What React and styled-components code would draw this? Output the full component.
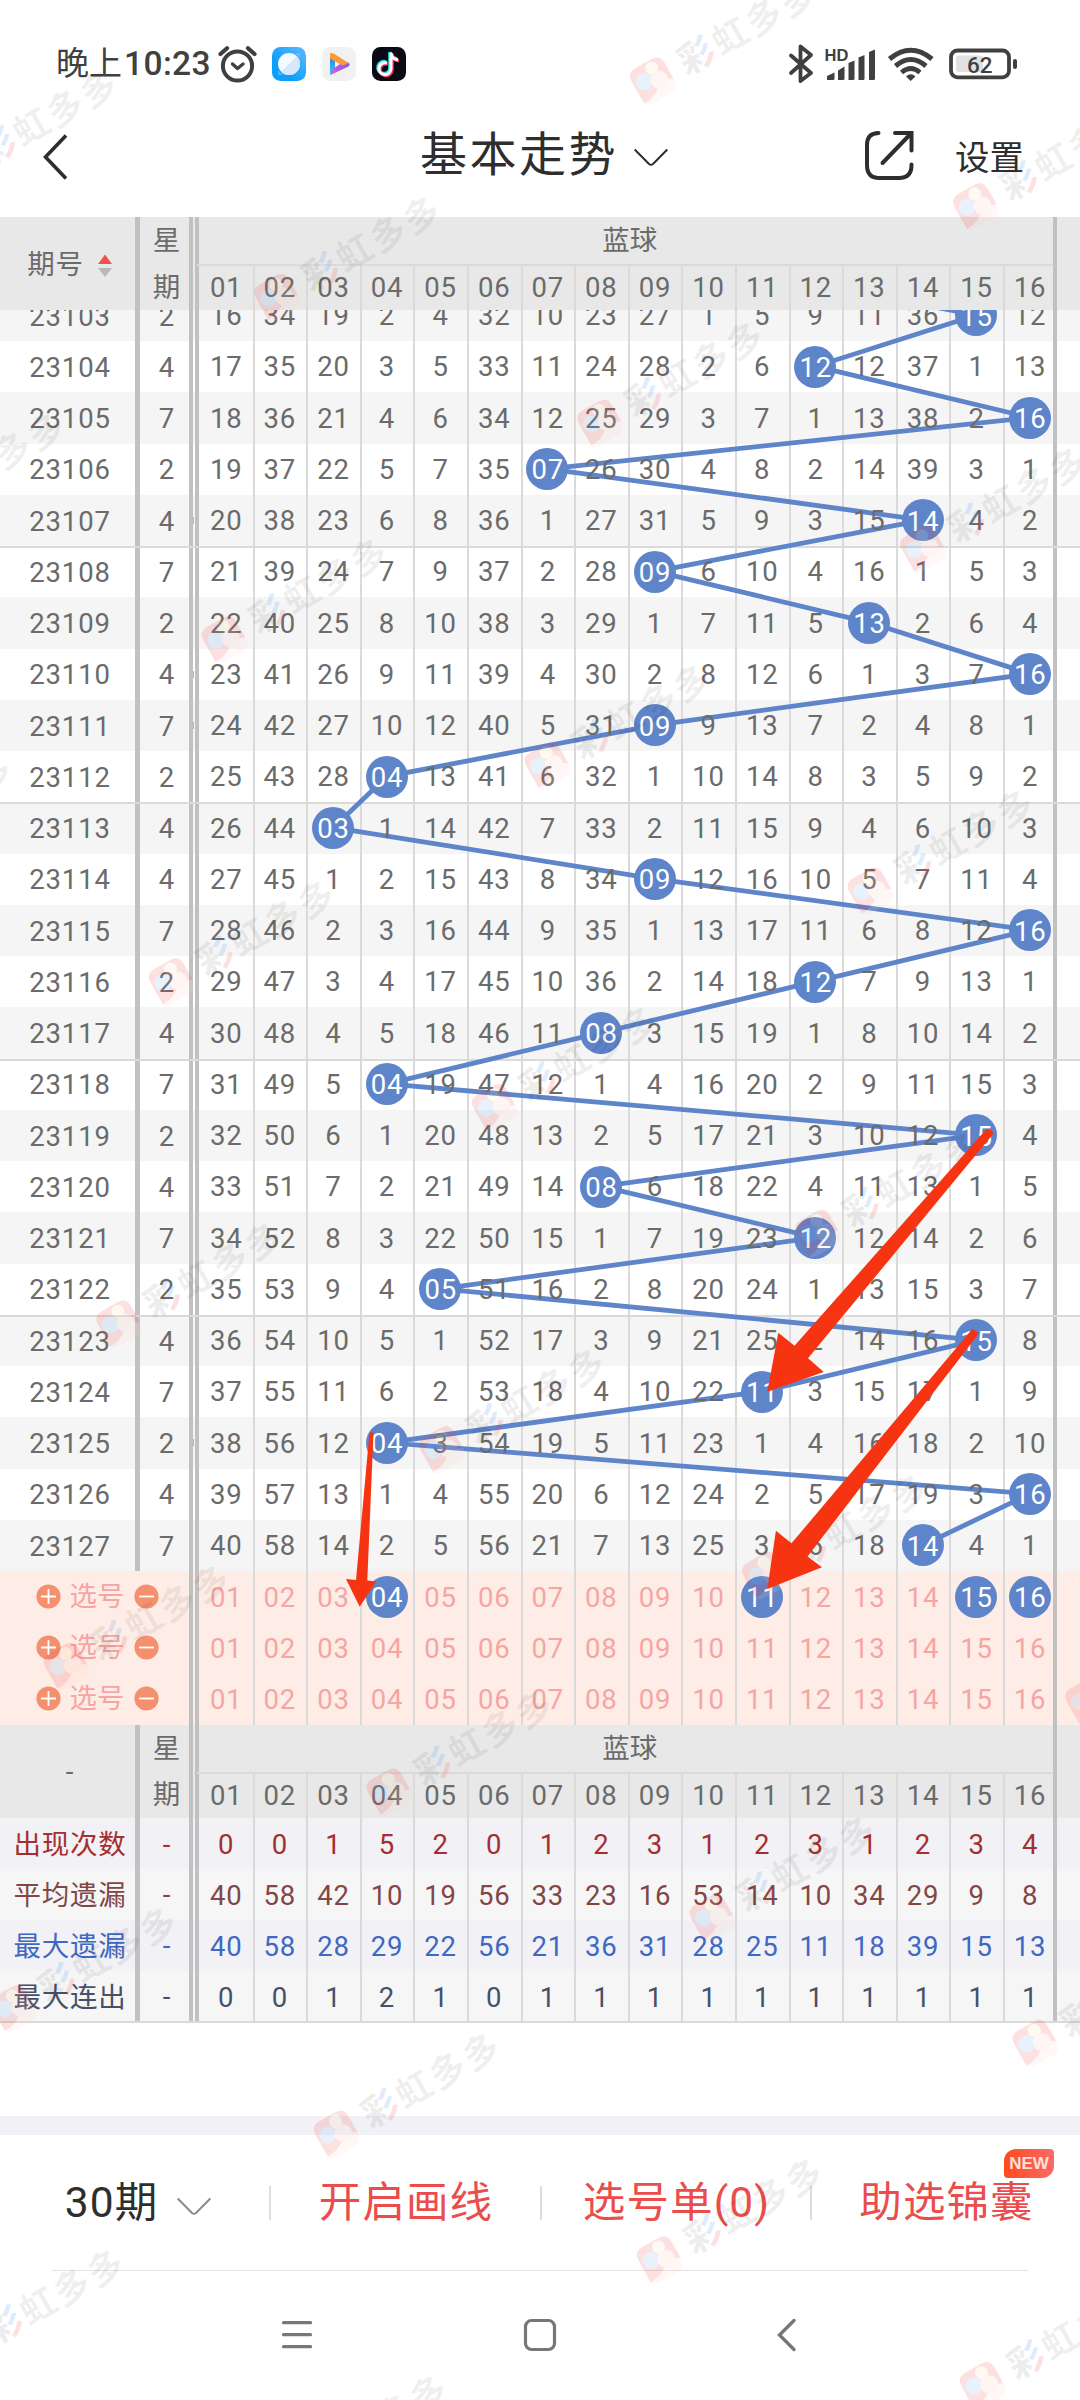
import React from 'react';
import styled, { createGlobalStyle, css } from 'styled-components';

const GlobalStyle = createGlobalStyle`
  * { box-sizing: border-box; }
  body { margin: 0; background: #fff; }
`;

const COL = 53.6;
const ROW = 51.25;
const GRID_X = 199.5;

const HITS = [15, 12, 16, 7, 14, 9, 13, 16, 9, 4, 3, 9, 16, 12, 8, 4, 15, 8, 12, 5, 15, 11, 4, 16, 14];
const WEEKDAYS = [2, 4, 7, 2, 4, 7, 2, 4, 7, 2, 4, 4, 7, 2, 4, 7, 2, 4, 7, 2, 4, 7, 2, 4, 7];
const FIRST_MISSES = [16, 34, 19, 2, 4, 32, 10, 23, 27, 1, 5, 9, 11, 36, 0, 12];
const NUMBERS = Array.from({ length: 16 }, (_, i) => i + 1);
const RULED = [23108, 23113, 23118, 23123];
const MARKED = [23107, 23110, 23111, 23125];
const pad = (n) => String(n).padStart(2, '0');

const DRAWS = [];
HITS.forEach((hit, i) => {
  const prev = i ? DRAWS[i - 1].misses : null;
  DRAWS.push({
    issue: 23103 + i,
    weekday: WEEKDAYS[i],
    hit,
    misses: prev ? prev.map((m, c) => (c + 1 === hit ? 0 : m + 1)) : FIRST_MISSES,
  });
});

const PICKS = [[4, 11, 15, 16], [], []];

const STATS = [
  { label: '出现次数', color: '#a52f2f', bg: '#f1f1f6', values: [0, 0, 1, 5, 2, 0, 1, 2, 3, 1, 2, 3, 1, 2, 3, 4] },
  { label: '平均遗漏', color: '#824646', bg: '#f6f6f6', values: [40, 58, 42, 10, 19, 56, 33, 23, 16, 53, 14, 10, 34, 29, 9, 8] },
  { label: '最大遗漏', color: '#3f68c2', bg: '#f1f1f6', values: [40, 58, 28, 29, 22, 56, 21, 36, 31, 28, 25, 11, 18, 39, 15, 13] },
  { label: '最大连出', color: '#47506a', bg: '#f6f6f6', values: [0, 0, 1, 2, 1, 0, 1, 1, 1, 1, 1, 1, 1, 1, 1, 1] },
];

const Screen = styled.div`
  position: relative;
  width: 1080px;
  height: 2400px;
  overflow: hidden;
  display: flex;
  flex-direction: column;
  background: #fff;
  color: #2e2e2e;
  font-family: Roboto, 'Noto Sans CJK SC', sans-serif;
  white-space: nowrap;
`;

const StatusBar = styled.header`
  height: 92px;
  padding: 36px 62px 0 56px;
  display: flex;
  align-items: flex-start;
  justify-content: space-between;
  color: #404040;
`;

const StatusGroup = styled.div`
  height: 56px;
  display: flex;
  align-items: center;
`;

const Clock = styled.span`
  width: 160px;
  font-size: 33px;
  font-weight: 400;
  line-height: 56px;
`;

const ClockDigits = styled.span`
  margin-left: 2px;
  font-size: 33.5px;
  font-weight: 500;
  letter-spacing: 0.4px;
`;

const AppIcons = styled.div`
  margin-left: 14px;
  display: flex;
  gap: 16px;
`;

const NavBar = styled.nav`
  height: 125px;
  display: grid;
  grid-template-columns: 420px 1fr 249px;
  align-items: center;
`;

const BackButton = styled.div`
  padding: 4px 0 0 42px;
  line-height: 0;
`;

const Title = styled.h1`
  margin: 0;
  height: 125px;
  display: flex;
  align-items: center;
  gap: 16px;
  font-size: 47px;
  font-weight: 400;
  letter-spacing: 2.5px;
  line-height: 125px;
  svg { margin-top: 6px; }
`;

const NavActions = styled.div`
  display: flex;
  align-items: center;
  padding-left: 32px;
  gap: 40px;
  font-size: 34.5px;
`;

const Table = styled.section`
  width: 1080px;
  color: #6b6b6b;
  font-size: 27.5px;
`;

const line = css`
  background: #dadada;
`;

const Columns = styled.div`
  display: grid;
  grid-template-columns: ${(p) => (p.$merged ? '189px' : '135px 5px 49px')} 4px 2px 4px 854px 4px 1fr;
  height: ${(p) => p.$height}px;
  background: ${(p) => p.$bg};
  color: ${(p) => p.$color || 'inherit'};
  margin-top: ${(p) => p.$shift || 0}px;
  position: relative;
`;

const Rule = styled.i`
  position: absolute;
  left: 0;
  right: 0;
  top: 0;
  height: 2px;
  ${line}
`;

const Divider = styled.i`
  background: #c1c1c1;
`;

const Gap = styled.i`
  display: flex;
  align-items: center;
  &::before {
    content: '';
    width: 1px;
    height: 7px;
    background: ${(p) => (p.$marked ? '#e4a5a5' : 'transparent')};
  }
`;

const Label = styled.div`
  display: flex;
  align-items: center;
  justify-content: center;
  letter-spacing: 0.8px;
  padding-left: ${(p) => p.$indent ?? 5}px;
  line-height: 1;
  padding-top: ${(p) => p.$drop ?? 2}px;
`;

const NumberGrid = styled.div`
  display: grid;
  grid-template-columns: repeat(16, ${COL}px);
  overflow: visible;
`;

const NumberCell = styled.div`
  display: flex;
  align-items: center;
  justify-content: center;
  height: 100%;
  margin-right: ${(p) => (p.$last ? 0 : -2)}px;
  border-right: ${(p) => (p.$last ? 0 : 2)}px solid #dadada;
`;

const Num = styled.span`
  position: relative;
  z-index: 2;
  letter-spacing: 0.8px;
  margin-right: -0.8px;
  line-height: 1;
  padding-top: ${(p) => p.$drop ?? 1}px;
`;

const Ball = styled.span`
  position: relative;
  z-index: 2;
  width: 42px;
  height: 42px;
  flex: none;
  border-radius: 50%;
  background: #5e84ca;
  color: #fff;
  display: flex;
  align-items: center;
  justify-content: center;
  letter-spacing: 0.8px;
  line-height: 1;
  padding: 2px 0 0 1px;
`;

const WeekHead = styled.div`
  display: grid;
  grid-template-rows: 48px 45px;
  align-items: center;
  justify-items: center;
  padding-left: 4px;
  line-height: 1;
`;

const BallHead = styled.div`
  display: grid;
  grid-template-rows: 47px 2px 44.3px;
`;

const HeadTitle = styled.div`
  display: flex;
  align-items: center;
  justify-content: center;
  line-height: 1;
  padding: 1px 0 0 4px;
`;

const HeadRule = styled.i`
  margin-left: -2px;
  ${line}
`;

const SortArrows = styled.svg`
  margin: 2px 0 0 14px;
`;

const Body = styled.div`
  position: relative;
  height: 1260.7px;
  overflow: hidden;
`;

const TrendLines = styled.svg`
  position: absolute;
  left: 0;
  top: 0;
  z-index: 1;
`;

const PickLabel = styled.div`
  display: flex;
  align-items: center;
  padding-left: 35.5px;
  gap: 9px;
  line-height: 1;
`;

const TableEnd = styled.div`
  height: 2px;
  ${line}
`;

const Spacer = styled.div`
  flex: 1;
`;

const Band = styled.div`
  height: 19px;
  background: #f1f1f6;
`;

const Toolbar = styled.footer`
  height: 135px;
  display: grid;
  grid-template-columns: 271px 271px 270px 1fr;
  align-items: center;
`;

const ToolItem = styled.div`
  position: relative;
  height: 34px;
  display: flex;
  align-items: center;
  justify-content: center;
  gap: 19px;
  border-right: ${(p) => (p.$last ? 0 : 2)}px solid #dedede;
  color: ${(p) => (p.$plain ? '#2e2e2e' : '#ea4d4b')};
  font-size: 42.5px;
  letter-spacing: 1.1px;
  line-height: 34px;
  padding-left: ${(p) => p.$indent ?? 1}px;
  padding-top: 1px;
  svg { margin-top: 6px; }
`;

const NewBadge = styled.span`
  position: absolute;
  left: 192px;
  top: -37px;
  width: 50px;
  height: 29px;
  border-radius: 12px 4px 12px 4px;
  background: linear-gradient(90deg, #ff4a1c, #fb6a6a);
  color: #ffe0d8;
  font-family: 'Liberation Sans', Arial, sans-serif;
  font-size: 17px;
  font-weight: 700;
  letter-spacing: 0;
  line-height: 30px;
  text-align: center;
`;

const SystemNav = styled.div`
  height: 130px;
  margin: 0 52px;
  border-top: 1px solid #e2e2e2;
  display: flex;
  align-items: flex-start;
  padding: 46px 0 0 229px;
`;

const NavGlyph = styled.svg`
  margin-right: ${(p) => p.$after || 0}px;
`;

const Overlay = styled.svg`
  position: absolute;
  left: 0;
  top: 0;
  z-index: ${(p) => p.$level};
  pointer-events: none;
`;

function AlarmIcon() {
  return (
    <svg width="42" height="40" viewBox="0 0 42 40" fill="none" stroke="#404040" strokeWidth="4" strokeLinecap="round">
      <circle cx="21.5" cy="22" r="14.6" />
      <path d="M4.5 10 L11 4.2 M38.5 10 L32 4.2" strokeWidth="4.2" />
      <path d="M16.5 20 L21.5 24.5 L27 20" strokeWidth="3.4" strokeLinejoin="round" />
    </svg>
  );
}

function AppBadges() {
  return (
    <AppIcons>
      <svg width="34" height="34" viewBox="0 0 34 34">
        <defs>
          <linearGradient id="sky" x1="0" y1="1" x2="1" y2="0">
            <stop offset="0.3" stopColor="#0d9dfb" />
            <stop offset="1" stopColor="#5fb9fb" />
          </linearGradient>
          <linearGradient id="moon" x1="0" y1="0" x2="1" y2="1">
            <stop offset="0.5" stopColor="#f6fbfe" />
            <stop offset="0.9" stopColor="#d9e9fb" />
          </linearGradient>
        </defs>
        <rect width="34" height="34" rx="8.5" fill="url(#sky)" />
        <circle cx="17" cy="17" r="11" fill="#f4fafe" />
        <path d="M24.800 9.200 A11 11 0 0 1 9.200 24.800z" fill="#d6e8fb" />
        <path d="M23 6 L28 6 L28 11z M6 23 L6 28 L11 28z" fill="#8ccbfb" fillOpacity="0.5" />
      </svg>
      <svg width="34" height="34" viewBox="0 0 34 34">
        <defs>
          <linearGradient id="vio" x1="0" y1="0" x2="1" y2="0">
            <stop offset="0" stopColor="#e35bd0" />
            <stop offset="1" stopColor="#7a5af5" />
          </linearGradient>
          <linearGradient id="cya" x1="0" y1="0" x2="0" y2="1">
            <stop offset="0" stopColor="#2f7df0" />
            <stop offset="1" stopColor="#33c6f2" />
          </linearGradient>
        </defs>
        <rect width="34" height="34" rx="8.5" fill="#f1f1f1" />
        <path d="M8 7 L13 11 V23 L8 28z" fill="url(#cya)" />
        <path d="M8.500 28 L26.500 19.500 Q29 17 26 15.200 L21 15 L11.500 21.500z" fill="url(#vio)" />
        <path d="M8 6.500 Q10 5.500 12 6.800 L27 16.300 L20.500 18.500 L8 11.500z" fill="#f99a35" />
      </svg>
      <svg width="34" height="34" viewBox="0 0 34 34" fill="none" strokeWidth="3.6">
        <rect width="34" height="34" rx="8.5" fill="#0a0a14" />
        <path d="M15 16 A6 6 0 1 0 19 22 V6 C19.500 10 22 12.500 26 12.700" stroke="#35e2e2" transform="translate(-1 -1)" />
        <path d="M15 16 A6 6 0 1 0 19 22 V6 C19.500 10 22 12.500 26 12.700" stroke="#fb2c58" transform="translate(1 1)" />
        <path d="M15 16 A6 6 0 1 0 19 22 V6 C19.500 10 22 12.500 26 12.700" stroke="#fff" strokeWidth="3" />
      </svg>
    </AppIcons>
  );
}

function StatusIcons() {
  return (
    <svg width="230" height="44" viewBox="788 41 230 44" fill="none" stroke="#404040">
      <path d="M791 54.500 L811 72 L800.500 80 V45.500 L811 54 L791 72" strokeWidth="3.800" strokeLinejoin="round" strokeLinecap="round" />
      <text x="824.500" y="59.500" fontSize="16.500" fontWeight="700" stroke="none" fill="#404040" fontFamily="'Liberation Sans', sans-serif">HD</text>
      <g fill="#404040" stroke="none">
        <path d="M827 79 V75 L834.500 71.500 V77.500 Q834.500 79 833 79z" />
        <path d="M838 79 V69.500 L844.500 65.500 V77.500 Q844.500 79 843 79z" />
        <path d="M848.500 79 V62 L854.500 59.500 V77.500 Q854.500 79 853 79z" />
        <path d="M858.500 79 V56.500 L864.500 54 V77.500 Q864.500 79 863 79z" />
        <path d="M869 79 V51 L875 48.500 V77.500 Q875 79 873.500 79z" />
        <path d="M906 75.500 Q910.700 71 915.500 75.500 L910.700 80z" />
      </g>
      <path d="M889.500 58 Q910.700 40.500 932 58" strokeWidth="5" />
      <path d="M895.500 65 Q910.700 52 926 65" strokeWidth="5" />
      <path d="M901.500 71.500 Q910.700 63.500 920 71.500" strokeWidth="4.600" />
      <rect x="956" y="54.500" width="27" height="16.500" rx="3" fill="#e1e1e1" stroke="none" />
      <rect x="951" y="49.500" width="58" height="26.800" rx="6.500" strokeWidth="3.800" />
      <rect x="1013" y="58" width="4" height="10" rx="2" fill="#404040" stroke="none" />
      <text x="979.700" y="71.500" fontSize="22.500" fontWeight="500" textAnchor="middle" stroke="none" fill="#404040" fontFamily="Roboto, sans-serif">62</text>
    </svg>
  );
}

function PickIcon({ plus }) {
  return (
    <svg width="25" height="25" viewBox="0 0 25 25">
      <circle cx="12.500" cy="12.500" r="12.100" fill="#f5906f" />
      <path d={plus ? 'M5 12.500H20M12.500 5V20' : 'M5 12.500H20'} stroke="#fff" strokeWidth="1.800" />
    </svg>
  );
}

function TableHead({ label, sortable }) {
  return (
    <Columns $height={93.3} $bg="#e8e8e8">
      <Label $indent={sortable ? 4 : 5} $drop={2}>
        {label}
        {sortable && (
          <SortArrows width="14" height="24" viewBox="0 0 14 24">
            <path d="M7 0.500L14 10H0z" fill="#f0524f" />
            <path d="M7 23L0 14H14z" fill="#b9b9b9" />
          </SortArrows>
        )}
      </Label>
      <Divider />
      <WeekHead>
        <span>星</span>
        <span>期</span>
      </WeekHead>
      <Divider />
      <Gap />
      <Divider />
      <BallHead>
        <HeadTitle>蓝球</HeadTitle>
        <HeadRule />
        <NumberGrid>
          {NUMBERS.map((n) => (
            <NumberCell key={n} $last={n === 16}>
              <Num $drop={0}>{pad(n)}</Num>
            </NumberCell>
          ))}
        </NumberGrid>
      </BallHead>
      <Divider />
    </Columns>
  );
}

function DrawRow({ draw, index }) {
  return (
    <Columns $height={ROW} $bg={index % 2 ? '#fff' : '#f5f5f5'} $shift={index ? 0 : -20.55}>
      <Label>{draw.issue}</Label>
      <Divider />
      <Label>{draw.weekday}</Label>
      <Divider />
      <Gap $marked={MARKED.includes(draw.issue)} />
      <Divider />
      <NumberGrid>
        {draw.misses.map((m, c) => (
          <NumberCell key={c} $last={c === 15}>
            {c + 1 === draw.hit ? <Ball>{pad(draw.hit)}</Ball> : <Num>{m}</Num>}
          </NumberCell>
        ))}
      </NumberGrid>
      <Divider />
      {RULED.includes(draw.issue) && <Rule />}
    </Columns>
  );
}

function PickRow({ picks }) {
  return (
    <Columns $merged $height={51.2} $bg="#feede6" $color="#f6a5a3">
      <PickLabel>
        <PickIcon plus />
        选号
        <PickIcon />
      </PickLabel>
      <Divider />
      <Gap />
      <Divider />
      <NumberGrid>
        {NUMBERS.map((n) => (
          <NumberCell key={n} $last={n === 16}>
            {picks.includes(n) ? <Ball>{pad(n)}</Ball> : <Num $drop={2}>{pad(n)}</Num>}
          </NumberCell>
        ))}
      </NumberGrid>
      <Divider />
    </Columns>
  );
}

function StatRow({ stat }) {
  return (
    <Columns $height={50.9} $bg={stat.bg} $color={stat.color}>
      <Label $drop={3}>{stat.label}</Label>
      <Divider />
      <Label>-</Label>
      <Divider />
      <Gap />
      <Divider />
      <NumberGrid>
        {stat.values.map((v, c) => (
          <NumberCell key={c} $last={c === 15}>
            <Num $drop={3}>{v}</Num>
          </NumberCell>
        ))}
      </NumberGrid>
      <Divider />
    </Columns>
  );
}

function Trend() {
  const points = [10, ...HITS].map((hit, i) => `${GRID_X + COL * (hit - 0.5)},${(i - 1) * ROW + 5.05}`);
  return (
    <TrendLines width="1080" height="1261">
      <polyline points={points.join(' ')} fill="none" stroke="#5e84ca" strokeWidth="4.800" />
    </TrendLines>
  );
}

function Watermarks() {
  const marks = [];
  for (let j = -2; j <= 7; j += 1) {
    for (let i = -2; i <= 5; i += 1) {
      const x = 277 + 323 * i - 52.7 * j;
      const y = 296.7 + 125.7 * i + 342.2 * j;
      if (x > -200 && x < 1120 && y > -40 && y < 2560) marks.push([x, y]);
    }
  }
  return (
    <Overlay width="1080" height="2400" $level={4}>
      <defs>
        <pattern id="tint" patternUnits="userSpaceOnUse" x="32" y="-20" width="38" height="40">
          <rect width="22" height="40" fill="#000" fillOpacity="0.07" />
          <rect x="22" width="16" height="23" fill="#2f8cf5" fillOpacity="0.16" />
          <rect x="22" y="23" width="16" height="17" fill="#f53c3c" fillOpacity="0.16" />
        </pattern>
      </defs>
      {marks.map(([x, y]) => (
        <g key={`${x},${y}`} transform={`translate(${x} ${y}) rotate(-29.5)`}>
          <g opacity="0.15">
            <path d="M-19 17 Q-8 13 0 9 Q8 5 19 9 Q19 20 10 20 H-10 Q-17 20 -19 17z" fill="#ffd2c4" />
            <path d="M-19 -9 Q-19 -19 -9 -19 H9 Q19 -19 19 -9 V9 Q8 3 0 10 Q-8 16 -19 16z" fill="#f23a3a" />
            <circle cx="5" cy="-11" r="6.500" fill="#fbd9a6" />
            <circle cx="-8" cy="-3" r="8.500" fill="#6aaaf2" />
            <circle cx="6" cy="3" r="9" fill="#fbc4b4" />
          </g>
          <g fontFamily="'Noto Sans CJK SC', sans-serif" fontSize="36" fontWeight="700" fill="#000">
            <text x="32" y="13" fill="url(#tint)">彩</text>
            <text x="71" y="13" fillOpacity="0.065" letterSpacing="2.500">虹多多</text>
          </g>
        </g>
      ))}
    </Overlay>
  );
}

function HandArrows() {
  return (
    <Overlay width="1080" height="2400" $level={5} fill="#f73411">
      <path d="M986.500 1129 L991 1130 L993.500 1133.500 L808 1358.300 L823.800 1372 L767.300 1391.700 L778.300 1332.700 L794.500 1345.700z" />
      <path d="M972.500 1328.700 L979 1333.300 L807.500 1556.500 L822 1567.300 L767.300 1589 L775.900 1530.700 L791.500 1543.300z" />
      <path d="M369.500 1432.500 H373.500 L367.300 1580.500 L376.300 1581.500 L359.700 1606.700 L346 1579 L356 1580z" />
    </Overlay>
  );
}

export default function App() {
  return (
    <Screen>
      <GlobalStyle />
      <StatusBar>
        <StatusGroup>
          <Clock>晚上<ClockDigits>10:23</ClockDigits></Clock>
          <AlarmIcon />
          <AppBadges />
        </StatusGroup>
        <StatusGroup>
          <StatusIcons />
        </StatusGroup>
      </StatusBar>

      <NavBar>
        <BackButton>
          <svg width="28" height="46" viewBox="0 0 28 46" fill="none" stroke="#2e2e2e" strokeWidth="3.600">
            <path d="M24 1.500 L3.500 23 L24 44.500" />
          </svg>
        </BackButton>
        <Title>
          基本走势
          <svg width="34" height="19" viewBox="0 0 34 19" fill="none" stroke="#2e2e2e" strokeWidth="2">
            <path d="M0.700 1.500 L15 16 Q17 17.500 19 16 L33.300 1.500" />
          </svg>
        </Title>
        <NavActions>
          <svg width="52" height="52" viewBox="0 0 52 52" fill="none" stroke="#2e2e2e" strokeWidth="4" strokeLinecap="round">
            <path d="M15.500 4 Q4 4 4 16 V36 Q4 49 16 49 H36 Q48.500 49 48.500 36 V35.500" />
            <path d="M32 4 H48.500 V21.500" />
            <path d="M48 4.500 L19.500 34" />
          </svg>
          设置
        </NavActions>
      </NavBar>

      <Table>
        <TableHead label="期号" sortable />
        <Body>
          {DRAWS.map((draw, i) => (
            <DrawRow key={draw.issue} draw={draw} index={i} />
          ))}
          <Trend />
        </Body>
        {PICKS.map((picks, i) => (
          <PickRow key={i} picks={picks} />
        ))}
        <TableHead label="-" />
        {STATS.map((stat) => (
          <StatRow key={stat.label} stat={stat} />
        ))}
        <TableEnd />
      </Table>

      <Spacer />
      <Band />
      <Toolbar>
        <ToolItem $plain $indent={7}>
          30期
          <svg width="34" height="19" viewBox="0 0 34 19" fill="none" stroke="#8a8a8a" strokeWidth="2">
            <path d="M0.700 1.500 L15 16 Q17 17.500 19 16 L33.300 1.500" />
          </svg>
        </ToolItem>
        <ToolItem>开启画线</ToolItem>
        <ToolItem>选号单(0)</ToolItem>
        <ToolItem $last>
          助选锦囊
          <NewBadge>NEW</NewBadge>
        </ToolItem>
      </Toolbar>
      <SystemNav>
        <NavGlyph $after={209} width="32" height="36" viewBox="0 0 32 36" stroke="#777" strokeWidth="3.200" strokeLinecap="round">
          <path d="M2.500 5.700H29.500M2.500 17.700H29.500M2.500 29.700H29.500" />
        </NavGlyph>
        <NavGlyph $after={218} width="36" height="36" viewBox="0 0 36 36" fill="none" stroke="#777" strokeWidth="3.200">
          <rect x="3.500" y="3.500" width="29" height="29" rx="6" />
        </NavGlyph>
        <NavGlyph width="24" height="36" viewBox="0 0 24 36" fill="none" stroke="#777" strokeWidth="3.400" strokeLinecap="round">
          <path d="M18 3.500L3.500 18L18 32.500" />
        </NavGlyph>
      </SystemNav>
      <Watermarks />
      <HandArrows />
    </Screen>
  );
}
